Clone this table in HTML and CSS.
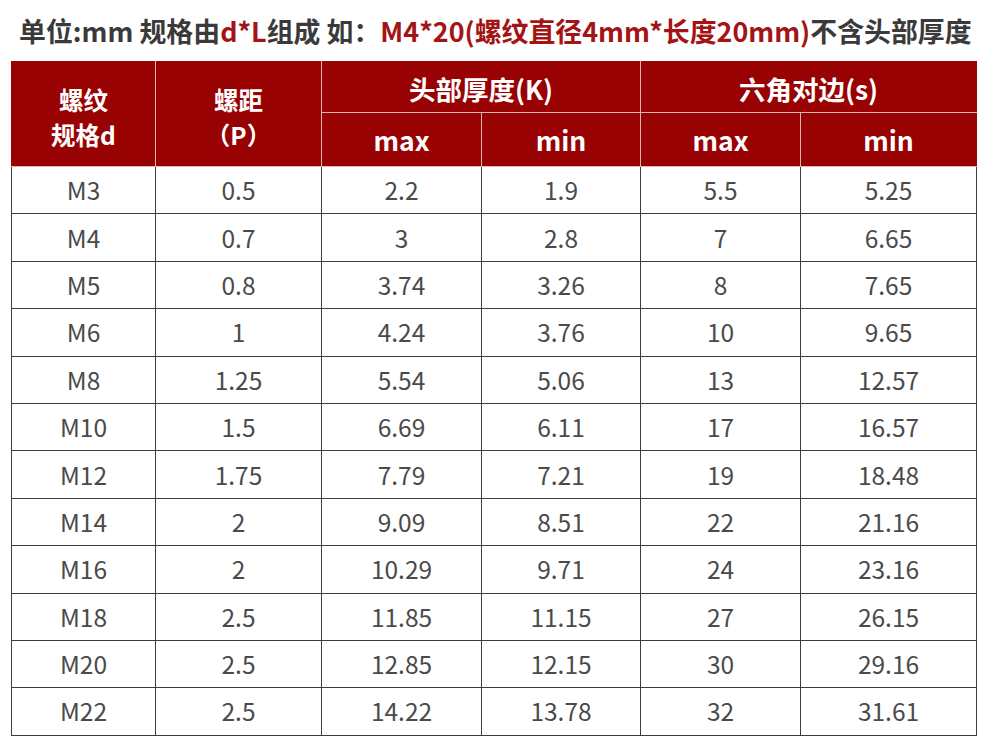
FILE: index.html
```html
<!DOCTYPE html>
<html lang="zh">
<head>
<meta charset="utf-8">
<link rel="stylesheet" href="styles.css">
</head>
<body>
<div class="page">
  <p class="note">单位:mm 规格由<span class="red">d*L</span>组成 如：<span class="red">M4*20(螺纹直径4mm*长度20mm)</span>不含头部厚度</p>
  <table class="spec">
    <colgroup>
      <col class="c1"><col class="c2"><col class="c3"><col class="c4"><col class="c5"><col class="c6">
    </colgroup>
    <thead>
      <tr class="h1">
        <th rowspan="2" class="stack">螺纹<br>规格d</th>
        <th rowspan="2" class="stack">螺距<br>（P）</th>
        <th colspan="2">头部厚度(K)</th>
        <th colspan="2">六角对边(s)</th>
      </tr>
      <tr class="h2">
        <th>max</th><th>min</th><th>max</th><th>min</th>
      </tr>
    </thead>
    <tbody>
      <tr><td>M3</td><td>0.5</td><td>2.2</td><td>1.9</td><td>5.5</td><td>5.25</td></tr>
      <tr><td>M4</td><td>0.7</td><td>3</td><td>2.8</td><td>7</td><td>6.65</td></tr>
      <tr><td>M5</td><td>0.8</td><td>3.74</td><td>3.26</td><td>8</td><td>7.65</td></tr>
      <tr><td>M6</td><td>1</td><td>4.24</td><td>3.76</td><td>10</td><td>9.65</td></tr>
      <tr><td>M8</td><td>1.25</td><td>5.54</td><td>5.06</td><td>13</td><td>12.57</td></tr>
      <tr><td>M10</td><td>1.5</td><td>6.69</td><td>6.11</td><td>17</td><td>16.57</td></tr>
      <tr><td>M12</td><td>1.75</td><td>7.79</td><td>7.21</td><td>19</td><td>18.48</td></tr>
      <tr><td>M14</td><td>2</td><td>9.09</td><td>8.51</td><td>22</td><td>21.16</td></tr>
      <tr><td>M16</td><td>2</td><td>10.29</td><td>9.71</td><td>24</td><td>23.16</td></tr>
      <tr><td>M18</td><td>2.5</td><td>11.85</td><td>11.15</td><td>27</td><td>26.15</td></tr>
      <tr><td>M20</td><td>2.5</td><td>12.85</td><td>12.15</td><td>30</td><td>29.16</td></tr>
      <tr><td>M22</td><td>2.5</td><td>14.22</td><td>13.78</td><td>32</td><td>31.61</td></tr>
    </tbody>
  </table>
</div>
</body>
</html>
```

FILE: styles.css
```css
html, body {
  margin: 0;
  padding: 0;
  background: #ffffff;
}

.page {
  width: 1000px;
  height: 754px;
  overflow: hidden;
  font-family: "Noto Sans CJK SC", "Noto Sans", sans-serif;
}

.note {
  margin: 0;
  padding: 13px 0 0 19px;
  height: 61px;
  box-sizing: border-box;
  font-size: 26.9px;
  line-height: 36px;
  font-weight: 700;
  color: #3a3a3a;
  white-space: nowrap;
}

.red {
  color: #a31515;
}

.spec {
  margin: 0 0 0 11px;
  width: 965px;
  border-collapse: collapse;
  table-layout: fixed;
}

.c1 { width: 144px; }
.c2 { width: 166px; }
.c3 { width: 160px; }
.c4 { width: 159px; }
.c5 { width: 160px; }
.c6 { width: 176px; }

.spec th {
  background: #990202;
  color: #ffffff;
  font-weight: 700;
  font-size: 26.5px;
  border: 1px solid #e6b3b3;
  padding: 0;
  text-align: center;
  vertical-align: middle;
}

.spec thead tr:first-child th {
  border-top-color: #990202;
}

.spec thead th:first-child {
  border-left-color: #990202;
}

.spec thead th:last-child,
.spec .h2 th:last-child {
  border-right-color: #990202;
}

.h1 { height: 51px; }
.h2 { height: 54px; }

.h1 th { padding-top: 2px; }

.stack {
  font-size: 24.5px !important;
  line-height: 35.5px;
  padding-top: 6px !important;
}

.spec td {
  height: 46.4px;
  padding: 0;
  border: 1px solid #3c3c3c;
  text-align: center;
  vertical-align: middle;
  font-size: 24.5px;
  line-height: 30px;
  color: #4a4a4a;
  font-weight: 400;
}
```
